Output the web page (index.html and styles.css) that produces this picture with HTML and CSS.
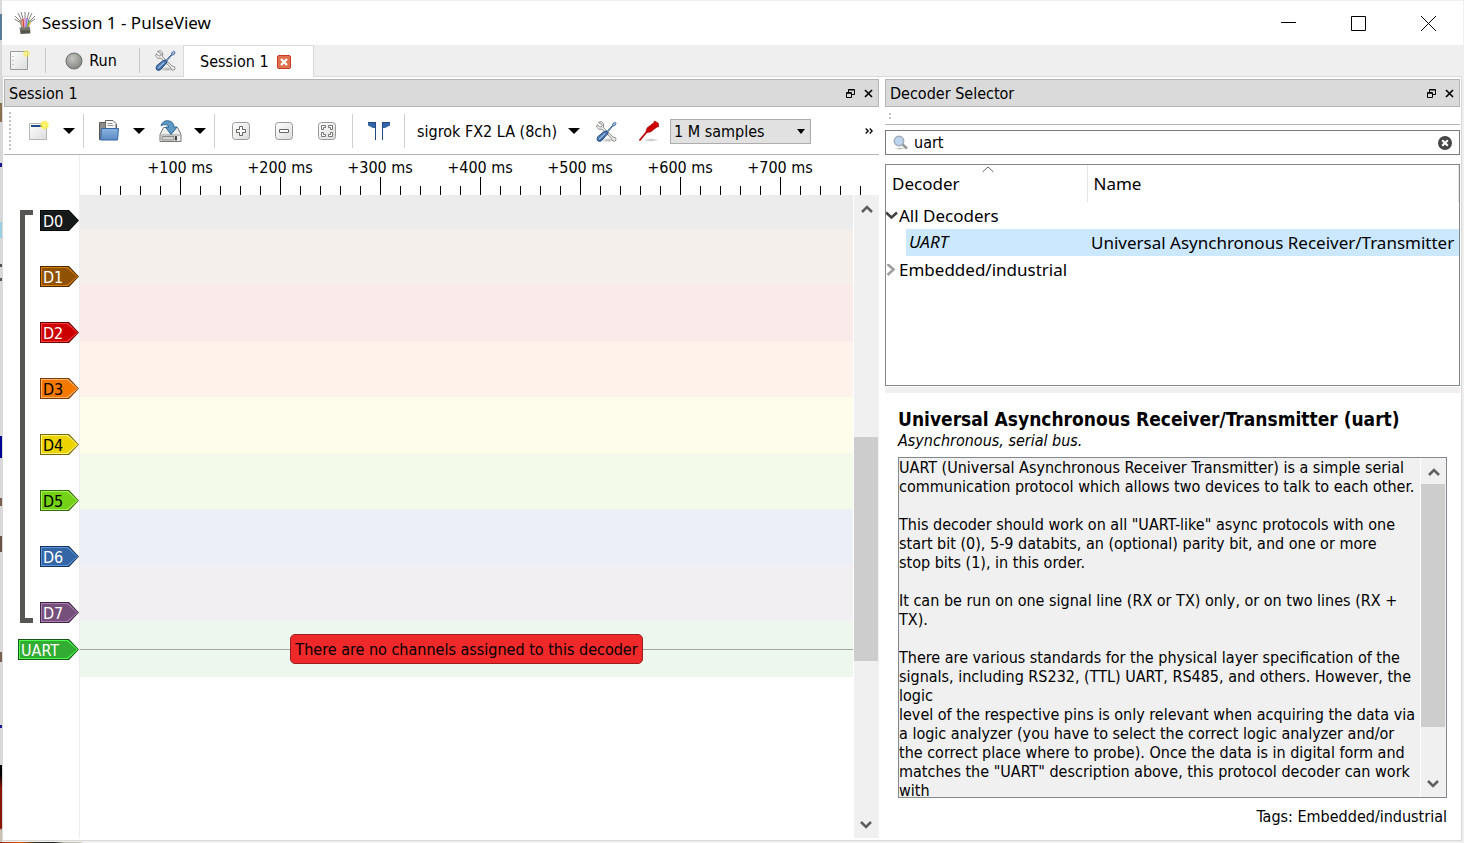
FILE: index.html
```html
<!DOCTYPE html>
<html lang="en">
<head>
<meta charset="utf-8">
<title>Session 1 - PulseView</title>
<link rel="stylesheet" href="styles.css">
</head>
<body>
<svg class="defs" aria-hidden="true">
  <defs>
    <linearGradient id="blade" x1="0" y1="0" x2="1" y2="1"><stop offset="0" stop-color="#729fcf"/><stop offset="1" stop-color="#204a87"/></linearGradient>
    <linearGradient id="paper" x1="0" y1="0" x2="1" y2="1"><stop offset="0" stop-color="#fff"/><stop offset="1" stop-color="#dcdcdc"/></linearGradient>
    <linearGradient id="folder" x1="0" y1="0" x2="0" y2="1"><stop offset="0" stop-color="#8db4df"/><stop offset="1" stop-color="#5a8ac4"/></linearGradient>
    <radialGradient id="ball" cx=".4" cy=".35" r=".65"><stop offset="0" stop-color="#c4c5c1"/><stop offset="1" stop-color="#868883"/></radialGradient>
    <radialGradient id="glow"><stop offset="0" stop-color="#fffde0"/><stop offset=".35" stop-color="#fbf04e"/><stop offset=".7" stop-color="#fcf03c" stop-opacity=".75"/><stop offset="1" stop-color="#fcf03c" stop-opacity="0"/></radialGradient>
    <radialGradient id="shade"><stop offset="0" stop-color="#000" stop-opacity=".28"/><stop offset="1" stop-color="#000" stop-opacity="0"/></radialGradient>
    <symbol id="tools" viewBox="0 0 24 24">
      <ellipse cx="14" cy="21" rx="9" ry="2.500" fill="url(#shade)"/>
      <path d="M3.500 2.600 6.600 1.600 9 4v4.200l9.800 9.600 2.600.8.600 2.200-1.400 1.400-2.400-.8-1-2.400L7.300 9.700H4L1.600 7.400l.8-2.600 2.800 2.500 2-.4.3-2z" fill="#eeeeec" stroke="#888a85" stroke-width="1"/>
      <path d="m12.300 12 5.900-6.200.4-2 2-1.500 1.500 1.400-1.600 2.300-2 .4-5.300 6.400z" fill="#a9c5e5" stroke="#204a87" stroke-width=".8"/>
      <path d="M11.500 11.500 13.600 13.800 12.300 15.500 6.800 21.600Q4.300 23.400 2.500 21.300 1.400 19.200 3.300 17L9.200 12.300Z" fill="url(#blade)" stroke="#204a87"/>
      <path d="m10.700 14-6.400 5.900" stroke="#a9c5e5" stroke-width="1.200"/>
    </symbol>
    <symbol id="float" viewBox="0 0 9 9"><path d="M2.500 3V.5h6v5H6M.5 3.500h5v5h-5zM2 1h6M1 4.300h4" fill="none" stroke="#000"/></symbol>
    <symbol id="cross" viewBox="0 0 9 9"><path d="m1 1 7 7M8 1 1 8" stroke="#000" stroke-width="1.600"/></symbol>
    <symbol id="down" viewBox="0 0 12 6"><path d="M0 0h12L6 6z"/></symbol>
    <symbol id="chevron" viewBox="0 0 12 9"><path d="m1 7 5-5 5 5" fill="none" stroke="#606060" stroke-width="2.600"/></symbol>
  </defs>
</svg>

<div class="window">
  <header class="titlebar">
    <svg class="app-icon" viewBox="0 0 22 24" aria-hidden="true">
      <path d="M8 17 6 10 1 5M9 17 7 8 4 2M10 17 9 8 7 1M11 16V1M12 17l1-9 2-7M13 17l2-9 3-6M14 17l2-7 5-5M7 12 .5 8M15 12l6-4" fill="none" stroke="#77736d" stroke-width=".9"/>
      <path d="m8.500 16-2-7" stroke="#c59a76" stroke-width="1.400"/><path d="m10 16-1.200-8" stroke="#e04840" stroke-width="1.400"/><path d="M11 16V7" stroke="#e79ad0" stroke-width="1.400"/><path d="m12.200 16 .8-9" stroke="#9b7ae8" stroke-width="1.400"/><path d="m13.500 16 1.500-7" stroke="#5cae5c" stroke-width="1.400"/><path d="m14.500 15 2-4" stroke="#e6b23c" stroke-width="1.400"/>
      <path d="M5.500 16.500 16 16l.5 6.500-10 .5z" fill="#77766a"/><path d="M6.500 19.500 16 19v3l-9 .5z" fill="#55554c"/>
    </svg>
    <h1>Session 1 - PulseView</h1>
    <div class="window-buttons">
      <button type="button" aria-label="Minimize"><svg width="15" height="15"><path d="M0 6.500h15" stroke="#000"/></svg></button>
      <button type="button" aria-label="Maximize"><svg width="15" height="15"><path d="M.5.5h14v14H.5z" fill="none" stroke="#000"/></svg></button>
      <button type="button" aria-label="Close"><svg width="15" height="15"><path d="m0 0 15 15M15 0 0 15" stroke="#000"/></svg></button>
    </div>
  </header>

  <nav class="tabstrip">
    <button type="button" class="new-session" aria-label="New session"><svg width="22" height="22" viewBox="0 0 22 22"><path d="M1.500 1.500h17v18h-17z" fill="url(#paper)" stroke="#9a9a98"/><path d="M4 6v1M4 10v1M4 14v1" stroke="#999"/><circle cx="17.500" cy="3.500" r="4" fill="url(#glow)" opacity=".7"/></svg></button>
    <span class="rule"></span>
    <button type="button" class="run"><svg width="18" height="18"><circle cx="9" cy="9" r="8" fill="url(#ball)" stroke="#6f716d"/></svg>Run</button>
    <span class="rule"></span>
    <button type="button" class="settings" aria-label="Settings"><svg width="23" height="23"><use href="#tools"/></svg></button>
    <div class="tab"><span>Session 1</span><button type="button" aria-label="Close tab"><svg width="14" height="14"><rect x=".5" y=".5" width="13" height="13" rx="1.500" fill="#e0714e" stroke="#cf3a27"/><path d="m4 4 6 6M10 4l-6 6" stroke="#fff" stroke-width="2.200"/></svg></button></div>
  </nav>

  <main class="docks">
    <section class="dock">
      <div class="dock-title"><h2>Session 1</h2><button type="button" aria-label="Float session"><svg width="9" height="9"><use href="#float"/></svg></button><button type="button" aria-label="Close session"><svg width="9" height="9"><use href="#cross"/></svg></button></div>
      <div class="toolbar">
        <span class="grip"></span>
        <button type="button" class="tool first" aria-label="New view"><svg width="22" height="22" viewBox="0 0 22 22"><path d="M1.500 3.500h17v16h-17z" fill="url(#paper)" stroke="#b4b4b0"/><path d="M3 6h13" stroke="#204a87" stroke-width="2"/><circle cx="16.500" cy="5" r="5" fill="url(#glow)"/></svg></button>
        <button type="button" class="drop" aria-label="New view menu"><svg width="12" height="6"><use href="#down"/></svg></button>
        <span class="rule"></span>
        <button type="button" class="tool open" aria-label="Open"><svg width="22" height="22" viewBox="0 0 22 22"><path d="M1.500 2.500h6v2h11v15h-17z" fill="#8d8f8b" stroke="#555753"/><path d="M7.500.500h7.500l3 3V12H7.500z" fill="#f6f6f5" stroke="#666864"/><path d="M9.500 3.500h5M9.500 5.500h6" stroke="#999"/><path d="M3.500 8.500h17l-1 11.500h-17z" fill="url(#folder)" stroke="#3465a4"/></svg></button>
        <button type="button" class="drop" aria-label="Open menu"><svg width="12" height="6"><use href="#down"/></svg></button>
        <button type="button" class="tool save" aria-label="Save"><svg width="23" height="23" viewBox="0 0 23 23"><path d="M4.500 7.500h14l3.500 7v7H1v-7z" fill="#eeeeec" stroke="#777975"/><path d="M1.500 15h20" stroke="#999"/><path d="M3 16.500h12v3.500H3z" fill="#d3d4d1" stroke="#888"/><path d="M17 16v4.500" stroke="#111" stroke-width="1.500"/><path d="M2 5.500Q4 .6 8.500.7 14.500 1 15 7h3l-6 7.500L6.500 7H10Q8.500 3 2 5.500Z" fill="#5e9ac4" stroke="#2d658e"/></svg></button>
        <button type="button" class="drop" aria-label="Save menu"><svg width="12" height="6"><use href="#down"/></svg></button>
        <span class="rule"></span>
        <div class="zooms">
        <button type="button" class="tool zoom" aria-label="Zoom in"><svg width="18" height="18"><rect x=".5" y=".5" width="17" height="17" rx="3" fill="url(#paper)" stroke="#989a96"/><path d="M7.500 4.500h3v3h3v3h-3v3h-3v-3h-3v-3h3z" fill="#fff" stroke="#666"/></svg></button>
        <button type="button" class="tool zoom" aria-label="Zoom out"><svg width="18" height="18"><rect x=".5" y=".5" width="17" height="17" rx="3" fill="url(#paper)" stroke="#989a96"/><path d="M4.500 7.500h9v3h-9z" fill="#fff" stroke="#666"/></svg></button>
        <button type="button" class="tool zoom" aria-label="Zoom to fit"><svg width="18" height="18"><rect x=".5" y=".5" width="17" height="17" rx="3" fill="url(#paper)" stroke="#989a96"/><path d="M3.500 3.500h4v2h-2v2h-2zM14.500 3.500h-4v2h2v2h2zM3.500 14.500h4v-2h-2v-2h-2zM14.500 14.500h-4v-2h2v-2h2z" fill="#fff" stroke="#777"/></svg></button>
        </div>
        <span class="rule"></span>
        <button type="button" class="tool cursors" aria-label="Show cursors"><svg width="22" height="18"><path d="M0 0h8v18H7V6H5L0 3.500zM22 0h-8v18h1V6h2l5-2.500z" fill="#3465a4"/><path d="M0 .5h7.500V18M22 .5h-7.500V18" fill="none" stroke="#204a87"/></svg></button>
        <span class="rule"></span>
        <button type="button" class="device">sigrok FX2 LA (8ch)<svg width="12" height="6"><use href="#down"/></svg></button>
        <button type="button" class="tool config" aria-label="Configure device"><svg width="23" height="23"><use href="#tools"/></svg></button>
        <button type="button" class="tool probe" aria-label="Configure channels"><svg width="22" height="22" viewBox="0 0 22 22"><ellipse cx="13" cy="20" rx="8" ry="1.800" fill="url(#shade)"/><path d="m1.500 20.500 7.500-9" stroke="#b00" stroke-width="1.800"/><path d="M8 11.500 9 8l7-5.500V1.500l1-.5 3.500 2.500v3.500h-1.500l-6.500 5-3.500.5z" fill="#c00" stroke="#a40000" stroke-width=".6"/></svg></button>
        <label class="samples"><span class="sr">Sample count</span><select><option>1 M samples</option><option>10 M samples</option></select><svg width="8" height="5"><path d="M0 0h8L4 5z"/></svg></label>
        <button type="button" class="more" aria-label="More tools"><svg width="8" height="6"><path d="m.7.500 2.500 2.500L.7 5.500M4.700.500 7.200 3 4.700 5.500" fill="none" stroke="#000" stroke-width="1.300"/></svg></button>
      </div>

      <div class="trace">
        <div class="gutter">
          <div class="group">
            <span class="bracket"></span>
            <div class="tags">
              <button type="button" class="tag d0">D0</button>
              <button type="button" class="tag d1">D1</button>
              <button type="button" class="tag d2">D2</button>
              <button type="button" class="tag d3">D3</button>
              <button type="button" class="tag d4">D4</button>
              <button type="button" class="tag d5">D5</button>
              <button type="button" class="tag d6">D6</button>
              <button type="button" class="tag d7">D7</button>
            </div>
          </div>
          <button type="button" class="tag uart">UART</button>
        </div>
        <div class="plot">
          <div class="ruler"><span>+100 ms</span><span>+200 ms</span><span>+300 ms</span><span>+400 ms</span><span>+500 ms</span><span>+600 ms</span><span>+700 ms</span></div>
          <div class="view">
            <div class="bands">
              <div class="band b0"></div><div class="band b1"></div><div class="band b2"></div><div class="band b3"></div><div class="band b4"></div><div class="band b5"></div><div class="band b6"></div><div class="band b7"></div>
              <div class="band decode"><p>There are no channels assigned to this decoder</p></div>
            </div>
            <div class="scroll">
              <button type="button" aria-label="Scroll up"><svg width="12" height="9"><use href="#chevron"/></svg></button>
              <span class="track main-track"><span class="thumb"></span></span>
              <button type="button" class="flip" aria-label="Scroll down"><svg width="12" height="9"><use href="#chevron"/></svg></button>
            </div>
          </div>
        </div>
      </div>
    </section>

    <section class="dock">
      <div class="dock-title"><h2>Decoder Selector</h2><button type="button" aria-label="Float selector"><svg width="9" height="9"><use href="#float"/></svg></button><button type="button" aria-label="Close selector"><svg width="9" height="9"><use href="#cross"/></svg></button></div>
      <div class="mini-bar"><span></span></div>
      <div class="search">
        <svg width="16" height="16" aria-hidden="true"><ellipse cx="7" cy="13.500" rx="6" ry="1.500" fill="url(#shade)"/><path d="m9 9 5 4.500" stroke="#999" stroke-width="2.600"/><circle cx="6" cy="6" r="4.700" fill="#bcd6f0" stroke="#a0a9b8" stroke-width="1.500"/></svg>
        <input type="text" value="uart" aria-label="Search decoders">
        <button type="button" aria-label="Clear search"><svg width="14" height="14"><circle cx="7" cy="7" r="7" fill="#464646"/><path d="m4.200 4.200 5.600 5.600M9.800 4.200 4.200 9.800" stroke="#fff" stroke-width="2.200"/></svg></button>
      </div>
      <div class="tree">
        <table>
          <colgroup><col class="col-decoder"><col></colgroup>
          <thead><tr><th>Decoder<svg class="sort" width="12" height="7"><path d="m.5 6 5.500-5 5.500 5" fill="none" stroke="#666"/></svg></th><th>Name</th></tr></thead>
          <tbody>
            <tr><td colspan="2"><div class="branch"><svg width="12" height="12"><path d="m0 2.500 5.500 5 5.500-5" fill="none" stroke="#404040" stroke-width="2.600"/></svg>All Decoders</div></td></tr>
            <tr class="selected"><td><div class="leaf"><em>UART</em></div></td><td class="name">Universal Asynchronous Receiver/Transmitter</td></tr>
            <tr><td colspan="2"><div class="branch"><svg width="12" height="12"><path d="m1.500 0 6 5.500-6 5.500" fill="none" stroke="#a0a0a0" stroke-width="2.600"/></svg>Embedded/industrial</div></td></tr>
          </tbody>
        </table>
      </div>
      <div class="splitter"></div>
      <article class="details">
        <h3>Universal Asynchronous Receiver/Transmitter (uart)</h3>
        <p class="summary">Asynchronous, serial bus.</p>
        <div class="doc">
          <div class="doc-text">UART (Universal Asynchronous Receiver Transmitter) is a simple serial
communication protocol which allows two devices to talk to each other.

This decoder should work on all "UART-like" async protocols with one
start bit (0), 5-9 databits, an (optional) parity bit, and one or more
stop bits (1), in this order.

It can be run on one signal line (RX or TX) only, or on two lines (RX +
TX).

There are various standards for the physical layer specification of the
signals, including RS232, (TTL) UART, RS485, and others. However, the
logic
level of the respective pins is only relevant when acquiring the data via
a logic analyzer (you have to select the correct logic analyzer and/or
the correct place where to probe). Once the data is in digital form and
matches the "UART" description above, this protocol decoder can work
with</div>
          <div class="scroll">
            <button type="button" aria-label="Scroll text up"><svg width="12" height="9"><use href="#chevron"/></svg></button>
            <span class="track doc-track"><span class="thumb"></span></span>
            <button type="button" class="flip" aria-label="Scroll text down"><svg width="12" height="9"><use href="#chevron"/></svg></button>
          </div>
        </div>
        <p class="tags-line">Tags: Embedded/industrial</p>
      </article>
    </section>
  </main>
</div>
</body>
</html>
```
FILE: styles.css
```css
* { box-sizing: border-box; }
html, body { height: 100%; }
body {
  margin: 0;
  padding: 1px 1px 2px 2px;
  background:
    linear-gradient(90deg, #8a2a10, #e0500c 20px, #2c3020 36px, #1c2418 54px, #b8b8a0 64px, #c8c8b4) 0 100% / 82px 1px no-repeat,
    linear-gradient(#d8d8d8 0 14px, #5a7a9a 14px 40px, #d8d8d8 40px 103px, #8a7050 103px 122px, #d8d8d8 122px 163px, #1a1a90 163px 167px, #d8d8d8 167px 222px, #9ccfe0 222px 238px, #d8d8d8 238px 264px, #555 264px 267px, #d8d8d8 267px 278px, #555 278px 281px, #d8d8d8 281px 436px, #000090 436px 458px, #d8d8d8 458px 498px, #7a6050 498px 506px, #d8d8d8 506px 536px, #6a5040 536px 552px, #d8d8d8 552px 652px, #7a6050 652px 662px, #d8d8d8 662px 725px, #1a1a90 725px 728px, #d8d8d8 728px 765px, #000 765px 775px, #8a1408 788px 828px, #c8c0b0 830px) 0 0 / 2px 100% no-repeat,
    #efefef;
  color: #000;
  font: 16px/19px "DejaVu Sans Condensed", "Noto Sans", sans-serif;
  overflow: hidden;
}
h1, h2, h3, p { margin: 0; font-size: inherit; font-weight: normal; }
button {
  margin: 0; padding: 0; border: 0; background: none;
  color: inherit; font: inherit;
  display: flex; align-items: center; justify-content: center; flex: none;
}
svg { display: block; flex: none; }
.defs { position: absolute; width: 0; height: 0; }
.sr { position: absolute; width: 1px; height: 1px; overflow: hidden; clip-path: inset(50%); }

.window { height: 100%; display: flex; flex-direction: column; background: #efefef; }
.titlebar { height: 44px; flex: none; display: flex; align-items: center; background: #fff; padding-left: 12px; }
.app-icon { width: 22px; height: 24px; }
.titlebar h1 { font: 17px/24px "Noto Sans", sans-serif; margin-left: 6px; }
.window-buttons { margin-left: auto; display: flex; }
.window-buttons button { width: 70px; height: 44px; }

.tabstrip { height: 31px; flex: none; display: flex; align-items: center; }
.rule { width: 1px; background: #c8c8c8; flex: none; align-self: stretch; margin: 3px 0; }
.new-session { width: 43px; padding-right: 8px; }
.run { width: 93px; gap: 6px; padding-right: 3px; }
.settings { width: 43px; padding-left: 8px; }
.tab {
  width: 131px; height: 32px; align-self: flex-start; position: relative;
  display: flex; align-items: center; gap: 8px; padding-left: 16px;
  background: #fff; border: 1px solid #d9d9d9; border-bottom: 0;
}

.docks {
  flex: 1; min-height: 0; display: grid; grid-template-columns: minmax(0, 1fr) 575px; column-gap: 6px;
  background: #fff; border: 1px solid #d9d9d9; padding: 2px 1px 2px 1px; margin-right: 1px;
}
.dock { display: flex; flex-direction: column; min-height: 0; min-width: 0; }
.dock-title {
  height: 28px; flex: none; display: flex; align-items: center; gap: 9px;
  background: #dadada; border: 1px solid #b4b4b4; padding: 0 5px 0 4px;
}
.dock-title h2 { margin-right: auto; }

.toolbar { height: 48px; flex: none; display: flex; align-items: center; border-bottom: 1px solid #b4b4b4; padding: 1px 6px 0 5px; }
.toolbar .rule { margin: 6px 0; background: #d0d0d0; }
.grip { width: 2px; height: 38px; background: repeating-linear-gradient(#c4c4c4 0 2px, #fff 2px 4px); }
.tool { width: 30px; }
.first { margin-left: 13px; }
.open { margin-left: 10px; }
.save { margin-left: 2px; }
.drop { width: 29px; }
.zooms { display: flex; padding: 0 4px; }
.zoom { width: 43px; }
.cursors { width: 51px; }
.device { margin-left: 12px; gap: 11px; }
.config { margin-left: 10px; width: 32px; }
.probe { width: 48px; padding-left: 5px; }
.samples { position: relative; }
.samples select {
  display: block; width: 141px; height: 25px; appearance: none; background: #e1e1e1; border: 1px solid #adadad; border-radius: 0;
  padding: 0 3px; font: inherit; color: inherit;
}
.samples svg { position: absolute; right: 6px; top: 10px; pointer-events: none; }
.more { margin-left: auto; }

.trace { flex: 1; min-height: 0; display: flex; }
.gutter { width: 76px; flex: none; border-right: 1px solid #ededed; padding-top: 55px; display: flex; flex-direction: column; align-items: flex-end; }
.group { display: flex; gap: 7px; }
.bracket {
  width: 13px; border: 5px solid #555753; border-right: 0;
  clip-path: polygon(0 0, 100% 0, 100% 5px, 5px 5px, 5px calc(100% - 5px), 100% calc(100% - 5px), 100% 100%, 0 100%);
}
.tags { display: flex; flex-direction: column; gap: 35px; }
.tag {
  --shape: polygon(0 0, calc(100% - 10px) 0, 100% 50%, calc(100% - 10px) 100%, 0 100%);
  position: relative; z-index: 0; width: 39px; height: 21px; padding: 1px 0 0 3px; justify-content: flex-start;
  background: var(--edge); color: #fff; clip-path: var(--shape);
}
.tag::before, .tag::after { content: ""; position: absolute; z-index: -1; inset: 1px; background: var(--light); clip-path: var(--shape); }
.tag::after { inset: 2px; background: var(--fill); }
.uart { width: 61px; margin-top: 16px; }
.d0 { --edge: #080a0a; --light: #1c2122; --fill: #16191a; }
.d1 { --edge: #472901; --light: #dc7e03; --fill: #8f5202; }
.d2 { --edge: #660000; --light: #ff3c3c; --fill: #cc0000; }
.d3 { --edge: #7a3c00; --light: #ffb066; --fill: #f57900; color: #000; }
.d4 { --edge: #766a00; --light: #fff27a; --fill: #edd400; color: #000; }
.d5 { --edge: #396a0b; --light: #a4f05c; --fill: #73d216; color: #000; }
.d6 { --edge: #1a3252; --light: #5b97e0; --fill: #3465a4; }
.d7 { --edge: #3a283d; --light: #b07ab6; --fill: #75507b; }
.uart { --edge: #185618; --light: #4cff4c; --fill: #32ac32; }

.plot { flex: 1; min-width: 0; display: flex; flex-direction: column; }
.ruler {
  height: 40px; flex: none; display: flex; padding: 3px 0 0 50px; overflow: hidden;
  background:
    repeating-linear-gradient(90deg, #000 0 1px, transparent 1px 100px) 100px 22px / 100% 18px no-repeat,
    repeating-linear-gradient(90deg, #000 0 1px, transparent 1px 20px) 20px 31px / 100% 9px no-repeat;
}
.ruler span { width: 100px; flex: none; text-align: center; }
.view { flex: 1; min-height: 0; display: flex; gap: 1px; }
.bands { flex: 1; min-width: 0; }
.band { height: 56px; }
.b0 { height: 34px; background: #ececec; }
.b1 { background: #f4efea; }
.b2 { background: #faeaea; }
.b3 { background: #fef2ea; }
.b4 { background: #fefcea; }
.b5 { background: #f3fae9; }
.b6 { background: #ecf0f6; }
.b7 { background: #f2eff3; }
.decode {
  display: flex; align-items: center; justify-content: center;
  background: linear-gradient(#a3a8a3, #a3a8a3) 0 28px / 100% 1px no-repeat #edf7ee;
}
.decode p { height: 30px; padding: 0 4px; line-height: 29px; background: #ef2929; border: 1px solid #9c1f1f; border-radius: 5px; white-space: nowrap; }

.scroll { width: 25px; flex: none; background: #f0f0f0; display: flex; flex-direction: column; }
.scroll button { height: 26px; padding-top: 3px; }
.scroll .flip { transform: rotate(180deg); padding-top: 0; }
.track { flex: 1; min-height: 0; display: flex; flex-direction: column; }
.thumb { background: #cdcdcd; margin-right: 1px; }
.main-track::before { content: ""; flex: 216; }
.main-track .thumb { flex: 224; }
.main-track::after { content: ""; flex: 151; }
.doc-track .thumb { flex: 242; }
.doc-track::after { content: ""; flex: 44; }

.mini-bar { height: 18px; flex: none; border-bottom: 1px solid #b4b4b4; padding: 6px 4px; }
.mini-bar span { display: block; width: 2px; height: 6px; background: linear-gradient(#c4c4c4 0 2px, #fff 2px 4px, #c4c4c4 4px); }
.search { height: 25px; flex: none; margin-top: 5px; border: 1px solid #7a7a7a; display: flex; align-items: center; padding: 0 7px; }
.search input { flex: 1; min-width: 0; border: 0; padding: 0; margin-left: 5px; background: none; font: inherit; outline: 0; }
.tree { height: 222px; flex: none; margin-top: 9px; border: 1px solid #828790; font: 17px/26px "Noto Sans", sans-serif; }
.tree table { width: 100%; border-collapse: collapse; table-layout: fixed; }
.col-decoder { width: 201px; }
.tree th, .tree td { padding: 0; text-align: left; font-weight: normal; white-space: nowrap; height: 27px; }
.tree th { position: relative; height: 37px; padding: 0 0 0 6px; border-right: 1px solid #e5e5e5; }
.sort { position: absolute; left: 96px; top: 1px; }
.branch { display: flex; align-items: center; gap: 1px; }
.leaf { height: 27px; margin-left: 20px; padding-left: 3px; background: #cce8ff; }
.selected .name { background: #cce8ff; padding-left: 4px; }
.splitter { height: 6px; flex: none; background: #f0f0f0; margin-top: 1px; }
.details { flex: 1; min-height: 0; display: flex; flex-direction: column; padding: 14px 13px 12px; }
.details h3 { font-size: 19px; line-height: 24px; font-weight: bold; white-space: nowrap; }
.summary { font-style: italic; }
.doc { flex: 1; min-height: 0; display: flex; margin-top: 7px; border: 1px solid #828790; background: #f0f0f0; }
.doc-text { flex: 1; min-width: 0; overflow: hidden; white-space: pre; }
.doc .scroll { border-left: 1px solid #fff; width: 26px; }
.tags-line { text-align: right; margin-top: 9px; }
```
